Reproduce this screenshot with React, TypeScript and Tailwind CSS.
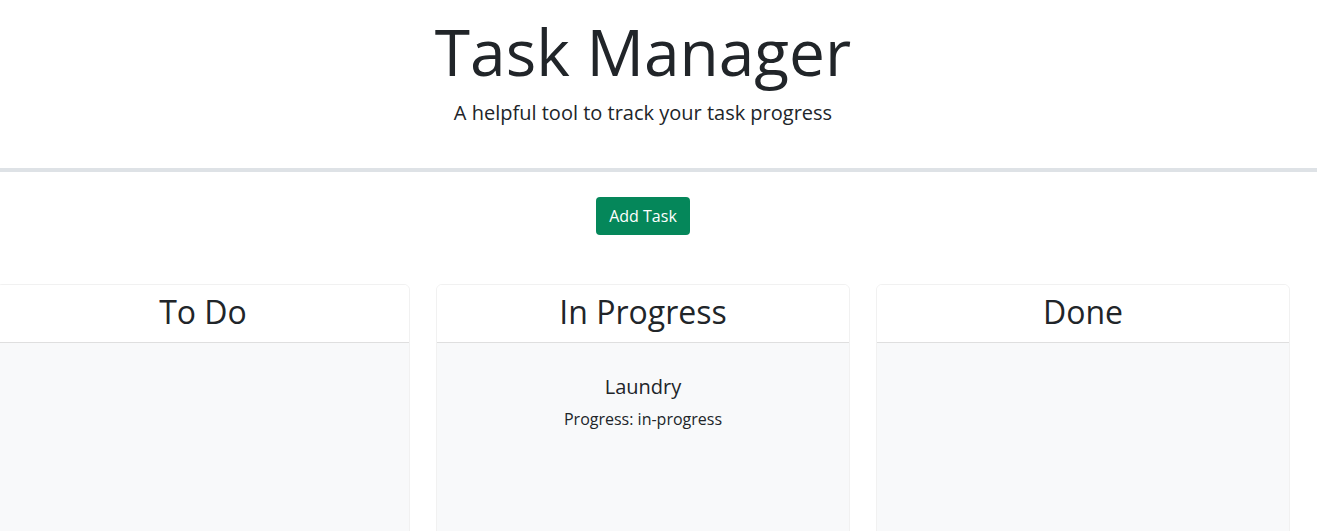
const columns = [
  { title: "To Do", tasks: [] as { name: string; status: string }[] },
  { title: "In Progress", tasks: [{ name: "Laundry", status: "in-progress" }] },
  { title: "Done", tasks: [] as { name: string; status: string }[] },
];

const Column = ({ title, tasks }: { title: string; tasks: { name: string; status: string }[] }) => (
  <div className="w-[414px] shrink-0 rounded-[6px] border border-[#f1f1f1] bg-white overflow-hidden">
    <div className="h-[58px] flex items-center justify-center border-b border-[#dfdfdf] bg-white">
      <h2 className="text-[32px] leading-[1.2] text-[#212529] mt-[-2px]">{title}</h2>
    </div>
    <div className="h-[300px] bg-[#f8f9fa] pt-[32px] text-center">
      {tasks.map((t) => (
        <div key={t.name}>
          <h5 className="text-[20px] leading-[1.2] text-[#212529] mb-[8px]">{t.name}</h5>
          <p className="text-[16px] leading-[1.5] text-[#212529]">Progress: {t.status}</p>
        </div>
      ))}
    </div>
  </div>
);

export default function App() {
  return (
    <div className="min-h-screen bg-white overflow-hidden font-['Open_Sans',sans-serif] text-[#212529]">
      <header className="w-[1286px] text-center pt-[14px]">
        <h1 className="text-[64px] leading-[1.2]">Task Manager</h1>
        <p className="text-[20px] leading-[1.5] mt-[7px]">A helpful tool to track your task progress</p>
      </header>
      <hr className="mt-[40px] border-0 h-[4px] bg-[#dee2e6]" />
      <div className="w-[1286px] flex justify-center mt-[25px]">
        <button className="h-[38px] px-[13px] rounded-[4px] bg-[#05875a] text-white text-[16px]">Add Task</button>
      </div>
      <div className="flex gap-[26px] ml-[-4px] mt-[49px]">
        {columns.map((c) => (
          <Column key={c.title} title={c.title} tasks={c.tasks} />
        ))}
      </div>
    </div>
  );
}
